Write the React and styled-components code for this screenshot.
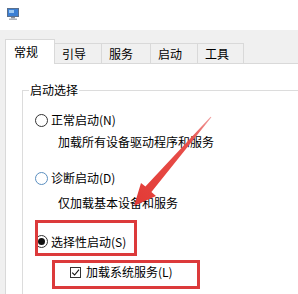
import React from 'react';
import styled, { createGlobalStyle } from 'styled-components';

const GlobalStyle = createGlobalStyle`
  html, body {
    margin: 0;
    padding: 0;
    background: #ffffff;
  }
  body {
    font-family: "Noto Sans CJK SC", "Microsoft YaHei", sans-serif;
    font-size: 12px;
    color: #000000;
  }
`;

const Window = styled.div`
  position: relative;
  width: 298px;
  height: 294px;
  overflow: hidden;
  display: flex;
  flex-direction: column;
  background: #f0f0f0;
`;

const TitleBar = styled.div`
  height: 30px;
  flex: none;
  background: #ffffff;
  display: flex;
  align-items: flex-start;
  padding: 7px 0 0 6px;
  box-sizing: border-box;
`;

const Body = styled.div`
  flex: 1;
  display: flex;
  flex-direction: column;
  padding: 9px 0 0 5px;
  min-height: 0;
`;

const TabStrip = styled.div`
  display: flex;
  align-items: flex-end;
  height: 24px;
  flex: none;
`;

const Tab = styled.div`
  box-sizing: border-box;
  width: ${(p) => p.$w}px;
  height: ${(p) => (p.$active ? 25 : 20)}px;
  padding-left: ${(p) => (p.$active ? 8 : 7)}px;
  line-height: ${(p) => (p.$active ? 24 : 20)}px;
  background: ${(p) => (p.$active ? '#ffffff' : '#f0f0f0')};
  border-top: 1px solid #d9d9d9;
  border-right: 1px solid #d9d9d9;
  border-left: ${(p) => (p.$active ? '1px solid #d9d9d9' : 'none')};
  margin-bottom: ${(p) => (p.$active ? -1 : 0)}px;
  position: relative;
  z-index: ${(p) => (p.$active ? 1 : 0)};
  white-space: nowrap;
`;

const Panel = styled.div`
  flex: 1;
  background: #ffffff;
  border-top: 1px solid #d9d9d9;
  border-left: 1px solid #d9d9d9;
  padding: 0 0 0 16px;
  display: flex;
  flex-direction: column;
`;

const Group = styled.fieldset`
  margin: 18px 0 0 0;
  padding: 14px 0 0 12px;
  border: 1px solid #dcdcdc;
  border-right: none;
  border-bottom: none;
  flex: 1;
  display: flex;
  flex-direction: column;
  align-items: flex-start;
  min-width: 0;
`;

const Legend = styled.legend`
  margin-left: -6px;
  padding: 0 1px;
  line-height: 16px;
`;

const Row = styled.div`
  display: inline-flex;
  align-items: center;
  height: 16px;
  line-height: 16px;
  margin-top: ${(p) => p.$top || 0}px;
  white-space: nowrap;
`;

const Desc = styled.div`
  height: 16px;
  line-height: 16px;
  margin-top: ${(p) => p.$top || 0}px;
  margin-left: 23px;
  white-space: nowrap;
`;

const Radio = styled.span`
  box-sizing: border-box;
  width: 13px;
  height: 13px;
  border-radius: 50%;
  border: 1px solid ${(p) => p.$tone || '#333333'};
  margin-right: 3px;
  display: inline-flex;
  align-items: center;
  justify-content: center;
  flex: none;

  &::after {
    content: '';
    display: ${(p) => (p.$checked ? 'block' : 'none')};
    width: 7px;
    height: 7px;
    border-radius: 50%;
    background: #111111;
  }
`;

const Check = styled.span`
  box-sizing: border-box;
  width: 11px;
  height: 11px;
  border: 1px solid #333333;
  margin-right: 5px;
  display: inline-flex;
  flex: none;
  position: relative;
`;

const Marked = styled.div`
  position: relative;
  margin-top: ${(p) => p.$top || 0}px;
  margin-left: ${(p) => p.$indent || 0}px;

  &::after {
    content: '';
    position: absolute;
    top: ${(p) => p.$box[0]}px;
    right: ${(p) => p.$box[1]}px;
    bottom: ${(p) => p.$box[2]}px;
    left: ${(p) => p.$box[3]}px;
    border: 3px solid #dc3a3b;
    pointer-events: none;
  }
`;

const ArrowLayer = styled.svg`
  position: absolute;
  left: 0;
  top: 0;
  width: 298px;
  height: 294px;
  pointer-events: none;
  z-index: 5;
`;

const AppIcon = () => (
  <svg width="14" height="14" viewBox="0 0 14 14">
    <rect x="1" y="1" width="12" height="9" fill="#5a6f8c" />
    <rect x="2" y="2" width="10" height="7" fill="#3b7fd4" />
    <rect x="3" y="3" width="5" height="3" fill="#9cc8f2" />
    <rect x="5" y="10" width="4" height="1.5" fill="#8a8f99" />
    <rect x="3" y="11.5" width="8" height="1.5" fill="#b0b4bb" />
  </svg>
);

const tabs = [
  { label: '常规', w: 50, active: true },
  { label: '引导', w: 47 },
  { label: '服务', w: 49 },
  { label: '启动', w: 47 },
  { label: '工具', w: 46 },
];

export default function App() {
  return (
    <>
      <GlobalStyle />
      <Window>
        <TitleBar>
          <AppIcon />
        </TitleBar>
        <Body>
          <TabStrip>
            {tabs.map((t) => (
              <Tab key={t.label} $w={t.w} $active={t.active}>
                {t.label}
              </Tab>
            ))}
          </TabStrip>
          <Panel>
            <Group>
              <Legend>启动选择</Legend>
              <Row>
                <Radio />
                正常启动(N)
              </Row>
              <Desc $top={6}>加载所有设备驱动程序和服务</Desc>
              <Row $top={20}>
                <Radio $tone="#5b8fc0" />
                诊断启动(D)
              </Row>
              <Desc $top={9}>仅加载基本设备和服务</Desc>
              <Marked $top={20} $box={[-11, -11, -6, 0]}>
                <Row>
                  <Radio $checked />
                  选择性启动(S)
                </Row>
              </Marked>
              <Marked $top={14} $indent={35} $box={[-4, -27, -8, -18]}>
                <Row>
                  <Check>
                    <svg width="9" height="9" viewBox="0 0 9 9" style={{ position: 'absolute', left: 0, top: 0 }}>
                      <path d="M1.2 4.6 L3.6 7 L8 1.6" fill="none" stroke="#111" strokeWidth="1.1" />
                    </svg>
                  </Check>
                  加载系统服务(L)
                </Row>
              </Marked>
            </Group>
          </Panel>
        </Body>
        <ArrowLayer viewBox="0 0 298 294">
          <defs>
            <linearGradient id="arrowFill" x1="211" y1="117" x2="134" y2="206" gradientUnits="userSpaceOnUse">
              <stop offset="0" stopColor="#f0a0a0" />
              <stop offset="0.25" stopColor="#e8504c" />
              <stop offset="1" stopColor="#e23a35" />
            </linearGradient>
          </defs>
          <polygon
            points="211.4,117.3 151.4,191.9 156,196 134,206 141,183 145.4,186.6 210.6,116.7"
            fill="url(#arrowFill)"
          />
        </ArrowLayer>
      </Window>
    </>
  );
}
